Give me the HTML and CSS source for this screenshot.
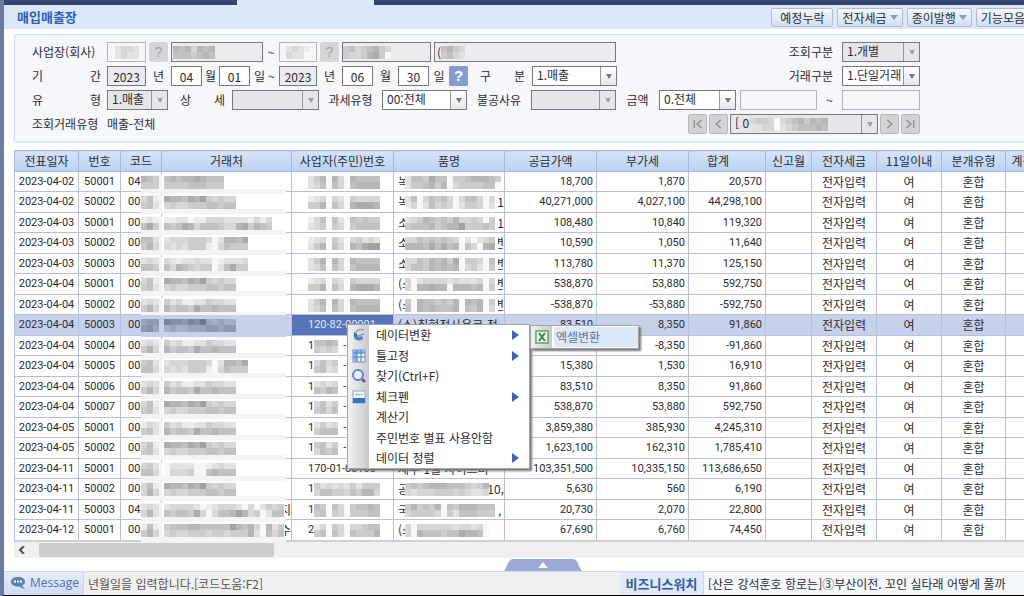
FILE: index.html
```html
<!DOCTYPE html>
<html lang="ko">
<head>
<meta charset="utf-8">
<title>매입매출장</title>
<link rel="stylesheet" href="styles.css">
</head>
<body>
<div class="app">
  <div class="tabstrip"><span class="tab-dark tab-first"></span><span class="tab-open"></span><span class="tab-dark tab-rest"></span></div>
  <header class="titlebar">
    <h1>매입매출장</h1>
    <div class="tools">
      <button type="button">예정누락</button>
      <button type="button">전자세금<i class="tri"></i></button>
      <button type="button">종이발행<i class="tri"></i></button>
      <button type="button">기능모음<i class="tri"></i></button>
    </div>
  </header>

  <main class="content">
    <form class="panel">
      <div class="row">
        <label class="lead" for="office">사업장(회사)</label>
        <span class="field w39 pale"><input id="office" disabled><svg class="mosaic" data-p="2332/2322" data-x="8"></svg></span>
        <button type="button" class="help off">?</button>
        <span class="field w92"><input aria-label="사업장명" disabled><svg class="mosaic" data-p="6563656/5554565" data-x="2"></svg></span>
        <span class="w10">~</span>
        <span class="field w38 pale"><input aria-label="사업장 끝" disabled><svg class="mosaic" data-p="2321/3220" data-x="7"></svg></span>
        <button type="button" class="help off">?</button>
        <span class="field w89"><input aria-label="사업장명 끝" disabled><svg class="mosaic" data-p="45345643/43346740" data-x="1"></svg></span>
        <span class="field w182"><input aria-label="주소" value="(이" disabled><svg class="mosaic" data-p="5643/4532" data-x="7"></svg></span>
        <span class="right">
          <label for="view">조회구분</label>
          <span class="drop off w78"><select id="view" disabled><option>1.개별</option></select></span>
        </span>
      </div>
      <div class="row">
        <label class="lead spread" for="y1">기 간</label>
        <input id="y1" class="w39" value="2023" disabled>
        <span class="w19">년</span>
        <input class="w31" aria-label="시작 월" value="04">
        <span class="w11">월</span>
        <input class="w31" aria-label="시작 일" value="01">
        <span class="w23">일 ~</span>
        <input class="w38" aria-label="끝 연도" value="2023" disabled>
        <span class="w19">년</span>
        <input class="w31" aria-label="끝 월" value="06">
        <span class="w19">월</span>
        <input class="w31" aria-label="끝 일" value="30">
        <span class="w14">일</span>
        <button type="button" class="help">?</button>
        <label class="w58 spread" for="kind">구 분</label>
        <span class="drop w85"><select id="kind"><option>1.매출</option></select></span>
        <span class="right">
          <label for="deal">거래구분</label>
          <span class="drop w78"><select id="deal"><option>1.단일거래</option></select></span>
        </span>
      </div>
      <div class="row">
        <label class="lead spread" for="type">유 형</label>
        <span class="drop off w61"><select id="type" disabled><option>1.매출</option></select></span>
        <label class="w58 spread" for="detail">상 세</label>
        <span class="drop off w87"><select id="detail" disabled><option></option></select></span>
        <label class="w57" for="tax">과세유형</label>
        <span class="drop w85"><select id="tax"><option>00:전체</option></select></span>
        <label class="w58" for="reason">불공사유</label>
        <span class="drop off w85"><select id="reason" disabled><option></option></select></span>
        <label class="w37" for="amount">금액</label>
        <span class="drop w77"><select id="amount"><option>0.전체</option></select></span>
        <span class="right">
          <span class="field w77 pale"><input aria-label="금액 시작" disabled></span>
          <span class="w19">~</span>
          <span class="field w78 pale"><input aria-label="금액 끝" disabled></span>
        </span>
      </div>
      <div class="row">
        <span class="lead">조회거래유형</span>
        <span>매출-전체</span>
        <span class="right pager">
          <button type="button" class="nav" aria-label="처음"><svg viewBox="0 0 19 19"><path d="M6 5v9M14 5L9 9.500l5 4.500"/></svg></button>
          <button type="button" class="nav" aria-label="이전"><svg viewBox="0 0 19 19"><path d="M12 5L7 9.500l5 4.500"/></svg></button>
          <span class="drop off w148"><select aria-label="거래처 선택" disabled><option>[ 0</option></select><svg class="mosaic" data-p="3443034564656/2233023455565" data-x="20"></svg></span>
          <button type="button" class="nav" aria-label="다음"><svg viewBox="0 0 19 19"><path d="M7 5l5 4.500L7 14"/></svg></button>
          <button type="button" class="nav" aria-label="마지막"><svg viewBox="0 0 19 19"><path d="M5 5l5 4.500L5 14M13 5v9"/></svg></button>
        </span>
      </div>
    </form>

    <section class="ledger">
      <table>
        <colgroup><col class="c64"><col class="c42"><col class="c41"><col class="c130"><col class="c102"><col class="c111"><col class="c92"><col class="c92"><col class="c77"><col class="c46"><col class="c65"><col class="c65"><col class="c64"><col class="c56"></colgroup>
        <thead><tr><th>전표일자</th><th>번호</th><th>코드</th><th>거래처</th><th>사업자(주민)번호</th><th>품명</th><th>공급가액</th><th>부가세</th><th class="sum">합계</th><th>신고월</th><th>전자세금</th><th>11일이내</th><th>분개유형</th><th>계정코드</th></tr></thead>
        <tbody id="rows"></tbody>
      </table>
      <div class="scrollbar"><svg class="arrow" viewBox="0 0 8 8"><path d="M6 0L2 4l4 4"/></svg><span class="thumb"></span></div>

      <div class="menus">
        <ul class="menu">
          <li><span class="ico"><svg viewBox="0 0 14 14"><path d="M2 7c-1 5 5 7 9 4l-1-3c-3 1-4 1-5-1z" fill="#4f7fce"/><path d="M4 5c1-4 5-4 8-3M6 8l6-2" fill="none" stroke="#8d9bb5" stroke-width="1.500"/><path d="M2 4l4 3-4 2z" fill="#3c6ab8"/></svg></span><button type="button">데이터변환</button><i class="more"></i></li>
          <li><span class="ico"><svg viewBox="0 0 14 14"><rect x="1" y="1" width="12" height="12" fill="#eaf3ff" stroke="#6594d0"/><path d="M1 1h12v3H1zM1 1h4v12H1z" fill="#8db6ea"/><path d="M5 1v12M9 1v12M1 4h12M1 8h12" stroke="#4d7dc0"/></svg></span><button type="button">틀고정</button><i class="more"></i></li>
          <li><span class="ico"><svg viewBox="0 0 14 14"><circle cx="6" cy="6" r="5" fill="#eef6ff" stroke="#5b87cc" stroke-width="2"/><path d="M10 10l3 3" stroke="#666" stroke-width="3"/></svg></span><button type="button">찾기(Ctrl+F)</button></li>
          <li><span class="ico"><svg viewBox="0 0 14 14"><rect x="1" y="1" width="12" height="12" fill="#f3f7fc" stroke="#91a7c6"/><path d="M3 5l2-1 2 1 2-1 2 1" fill="none" stroke="#9ab"/><path d="M1 8h12v5H1z" fill="#2f72c8"/></svg></span><button type="button">체크펜</button><i class="more"></i></li>
          <li><span class="ico"></span><button type="button">계산기</button></li>
          <li><span class="ico"></span><button type="button">주민번호 별표 사용안함</button></li>
          <li><span class="ico"></span><button type="button">데이터 정렬</button><i class="more"></i></li>
        </ul>
        <ul class="menu sub">
          <li><span class="ico"><svg viewBox="0 0 14 14"><rect x="1" y="1" width="12" height="12" fill="#f4fbf2" stroke="#5da35f" stroke-width="1.500"/><path d="M4 3l6 8M10 3l-6 8" stroke="#2f8b3c" stroke-width="2"/></svg></span><button type="button">엑셀변환</button></li>
        </ul>
      </div>
    </section>
  </main>

  <div class="drawer"><button type="button" aria-label="펼치기"><svg viewBox="0 0 78 12"><path d="M0 12C4 8 3 0 10 0h58c7 0 6 8 10 12z" fill="#9aaad4"/><path d="M34 9l5-6 5 6z" fill="#fff"/></svg></button></div>
  <footer class="status">
    <div class="msg"><svg viewBox="0 0 16 14"><path d="M8 1c4 0 7 2 7 4.500 0 2-1 3-3 4l3 4-6-3C4 10.500 1 9 1 5.500 1 3 4 1 8 1z" fill="#5d7fb5"/><path d="M4 5.500h2M7 5.500h2M10 5.500h2" stroke="#fff" stroke-width="2"/></svg>Message</div>
    <p class="hint">년월일을 입력합니다.[코드도움:F2]</p>
    <strong>비즈니스워치</strong>
    <a class="news" href="#">[산은 강석훈호 항로는]③부산이전. 꼬인 실타래 어떻게 풀까</a>
  </footer>
</div>
<script src="ledger.js"></script>
</body>
</html>
```

FILE: ledger.js
```js
// Masked values: one digit per 6px block (0 = clear, 9 = darkest), rows split by "/".
const A = '766576843433/343344455455';
const B = '423112243322/645547556555';
const C = '23334443026657/32324441035444';
const D = '32122322012223/53654344025744';
const ID1 = '246063065555/235053056666';
const ID2 = '123032043333/446053067776';
const ID3 = '135052054544/234043045555';

// date, no, code, code mask, name mask, name tail, id, id mask, item, item mask, item tail, supply, vat, total
const entries = [
  ['04-02','50001','04','654/444','5656676555/4444555444','','',ID1,'녹','2554755044566654/2445646034444550','','18,700','1,870','20,570'],
  ['04-02','50002','00','351/452',A,'','',ID2,'녹','250354530355303/130253430244302','1','40,271,000','4,027,100','44,298,100'],
  ['04-03','50001','00','121/574','112201133322221313/545763555433674654','','',ID3,'소','234654546334304/455564566844454','1','108,480','10,840','119,320'],
  ['04-03','50002','00','552/463',C,'','','123042034232/246053065788','소','335454543020234/666575756053067','변','10,590','1,050','11,640'],
  ['04-03','50003','00','232/554',D,'','',ID1,'소','335465647044305/355465656034204','변','113,780','11,370','125,150'],
  ['04-04','50001','00','351/452',A,'','',ID2,'(소','302333323222303/306676606665604','변','538,870','53,880','592,750'],
  ['04-04','50002','00','232/463',B,'','',ID1,'(소','406554546065604/506565556054603','변','-538,870','-53,880','-592,750'],
  ['04-04','50003','00','455/564',A,'','120-82-00001','','(소)취현적사용료 적','','','83,510','8,350','91,860'],
  ['04-04','50004','00','232/463',B,'','1','5565/4343','','','','-83,510','-8,350','-91,860'],
  ['04-04','50005','00','452/553',C,'','1','3534/4523','','','','15,380','1,530','16,910'],
  ['04-04','50006','00','232/463',B,'','1','2323/5465','','','','83,510','8,350','91,860'],
  ['04-04','50007','00','351/452',A,'','1','3524/4535','','','','538,870','53,880','592,750'],
  ['04-05','50001','00','132/452',B,'','1','2423/4555','','','','3,859,380','385,930','4,245,310'],
  ['04-05','50002','00','351/452',A,'','1','4524/3545','','','','1,623,100','162,310','1,785,410'],
  ['04-11','50001','00','342/553','022220012322/033340056555','','170-01-00100','','제주 1월 사이트비','','','103,351,500','10,335,150','113,686,650'],
  ['04-11','50002','00','351/363',A,'','1','42323242444/35544354663','공인전용금(2020.10,','45456665554346/32333444343223','','5,630','560','6,190'],
  ['04-11','50003','042','232/362','23333201233320302434/54554730355686340255','지','1','54053045565/45043044455','국','464546054666555/344443042555444',',','20,730','2,070','22,800'],
  ['04-12','50001','00','151/463','45556655555865630624/34334443443444620535','수','2','13043033455/45053054446','(소','30333333233230/30655545576650','','67,690','6,760','74,450']
];

const NS = 'http://www.w3.org/2000/svg';

function block(svg, x, y, w, h, fill) {
  const r = document.createElementNS(NS, 'rect');
  r.setAttribute('x', x); r.setAttribute('y', y);
  r.setAttribute('width', w); r.setAttribute('height', h);
  r.setAttribute('fill', fill);
  svg.appendChild(r);
}

function paint(svg, pattern, dark, band) {
  if (band) {
    block(svg, 0, 3, 21, 18, dark ? '#c7d2ea' : '#f3f4f6');
    block(svg, 0, 17, band, 5, dark ? '#c7d2ea' : '#f3f4f6');
  }
  pattern.split('/').forEach((line, r) => [...line].forEach((c, i) => {
    const g = 248 - 11 * c;
    const fill = dark ? `rgb(${g - 50},${g - 40},${g - 15})` : `rgb(${g},${g},${g})`;
    if (!(dark && c === '0')) block(svg, i * 6, 4 + r * 6, 6, r ? 7 : 6, fill);
  }));
}

function mask(td, cls, pattern, dark, band) {
  if (!pattern) return;
  const svg = document.createElementNS(NS, 'svg');
  svg.setAttribute('class', 'mosaic ' + cls);
  paint(svg, pattern, dark, band);
  td.appendChild(svg);
}

function cell(tr, text, cls) {
  const td = document.createElement('td');
  if (cls) td.className = cls;
  td.textContent = text;
  tr.appendChild(td);
  return td;
}

function tail(td, text, cls) {
  if (!text) return;
  const s = document.createElement('span');
  s.className = cls;
  s.textContent = text;
  td.appendChild(s);
}

const body = document.getElementById('rows');
entries.forEach((e, i) => {
  const [date, no, code, codeM, nameM, nameT, id, idM, item, itemM, itemT, supply, vat, total] = e;
  const tr = document.createElement('tr');
  const on = i === 7;
  if (on) tr.className = 'selected';
  cell(tr, '2023-' + date, 'num');
  cell(tr, no, 'num');
  mask(cell(tr, code, 'code'), 'at-code', codeM, on, 145);
  const name = cell(tr, '', 'name');
  mask(name, 'at-name', nameM, on, 0);
  tail(name, nameT, 'tail');
  const idCell = cell(tr, id, 'id');
  mask(idCell, id ? 'at-id-tail' : 'at-id', idM, false, 0);
  if (i > 7 && i < 14) tail(idCell, '-', 'dash');
  const it = cell(tr, item, 'item');
  mask(it, 'at-item', itemM, false, 0);
  tail(it, itemT, 'tail');
  cell(tr, supply, 'amt');
  cell(tr, vat, 'amt');
  cell(tr, total, 'amt');
  cell(tr, '');
  cell(tr, '전자입력');
  cell(tr, '여');
  cell(tr, '혼합');
  cell(tr, '');
  body.appendChild(tr);
});

document.querySelectorAll('.panel .mosaic').forEach(svg => {
  svg.style.left = svg.dataset.x + 'px';
  paint(svg, svg.dataset.p, false, 0);
});
```

FILE: styles.css
```css
* { box-sizing: border-box; }
body {
  margin: 0;
  background: #fff;
  color: #2b2b30;
  font: 12px/16px "Noto Sans CJK KR", sans-serif;
}
button, input, select { font: inherit; color: inherit; margin: 0; padding: 0; }
button { cursor: pointer; }
ul, p, h1 { margin: 0; padding: 0; list-style: none; }

.app {
  display: flex;
  flex-direction: column;
  min-height: 100vh;
  overflow: hidden;
  border-left: 4px solid #6a7ba3;
  border-bottom: 2px solid #000;
}
.tabstrip { display: flex; height: 5px; }
.tab-dark { background: #33456f; }
.tab-first { width: 233px; }
.tab-open { width: 137px; background: #dce9fb; }
.tab-rest { flex: 1; }

.titlebar {
  display: flex;
  justify-content: space-between;
  height: 24px;
  padding: 3px 0 2px 13px;
  background: #dce9fb;
}
.titlebar h1 { font-size: 13px; line-height: 18px; font-weight: 700; color: #2a5eb0; }
.tools { display: flex; gap: 4px; margin-right: -17px; }
.tools button {
  display: flex;
  align-items: center;
  gap: 3px;
  height: 19px;
  padding: 0 8px;
  border: 1px solid #aebcd2;
  border-radius: 2px;
  background: linear-gradient(#f6f9fd, #d3deee);
}
.tools button + button { padding: 0 4px; }
.tri { border: 4px solid transparent; border-top: 5px solid #8b9bb5; border-bottom: 0; }

.content { flex: 1; padding: 5px 0 0 10px; }
.panel {
  display: flex;
  flex-direction: column;
  gap: 4px;
  height: 109px;
  padding: 7px 104px 0 17px;
  border: 1px solid #cfdae9;
  border-right: 0;
  border-bottom: 2px solid #dfe5ef;
  border-radius: 3px 0 0 3px;
  background: #f6f7fb;
}
.row { display: flex; align-items: center; gap: 3px; height: 20px; white-space: nowrap; text-align: center; }
.row > * { flex: none; }
.lead { width: 72px; padding-right: 3px; text-align: left; }
.spread { text-align-last: justify; }
.w58.spread { padding: 0 4px 0 9px; }
.row .right { display: flex; align-items: center; gap: 3px; margin-left: auto; }
.row .pager { gap: 2px; }
.right label { padding-right: 6px; }

.row input {
  display: block;
  height: 20px;
  border: 1px solid #77787c;
  border-radius: 0;
  background: #fff;
  text-align: center;
}
.row input:disabled { background: #ececee; color: #2b2b30; }
.row .field { position: relative; overflow: hidden; }
.row .field input { width: 100%; text-align: left; padding-left: 2px; }
.row .pale input { background: #f7f6f8; border-color: #b4b4b8; }
.help {
  width: 19px;
  height: 20px;
  border: 0;
  border-radius: 2px;
  background: #869bd0;
  color: #fff;
  font: 700 15px/20px "Liberation Sans", sans-serif;
}
.help.off { background: #d5d5d8; color: #a2a2a6; font-weight: 400; }

.drop { position: relative; height: 20px; }
.drop select {
  appearance: none;
  display: block;
  width: 100%;
  height: 20px;
  padding: 0 0 2px 4px;
  border: 1px solid #77787c;
  border-radius: 0;
  background: #fff;
  opacity: 1;
}
.drop::before {
  content: "";
  position: absolute;
  right: 1px;
  top: 1px;
  width: 15px;
  height: 18px;
  border-left: 1px solid #97979b;
  background: linear-gradient(#fff, #e6e6e9);
}
.drop::after {
  content: "";
  position: absolute;
  right: 5px;
  top: 8px;
  border: 3px solid transparent;
  border-top: 5px solid #77787d;
  border-bottom: 0;
}
.drop.off select, .drop.off::before { background: #e6e6e8; }
.drop.off::after { border-top-color: #a0a0a4; }
.nav { width: 19px; height: 20px; border: 1px solid #b8b8bb; border-radius: 2px; background: #d3d3d5; }
.nav svg { display: block; width: 17px; height: 18px; fill: none; stroke: #8e8e93; stroke-width: 1.500; }

.w10 { width: 10px; } .w11 { width: 11px; } .w14 { width: 14px; } .w19 { width: 19px; }
.w23 { width: 23px; } .w31 { width: 31px; } .w37 { width: 37px; } .w38 { width: 38px; }
.w39 { width: 39px; } .w57 { width: 57px; } .w58 { width: 58px; } .w61 { width: 61px; }
.w77 { width: 77px; } .w78 { width: 78px; } .w85 { width: 85px; } .w87 { width: 87px; }
.w89 { width: 89px; } .w92 { width: 92px; } .w148 { width: 148px; } .w182 { width: 182px; }

.mosaic { position: absolute; top: 0; height: 20px; width: 84px; overflow: visible; pointer-events: none; }

.ledger { position: relative; margin-top: 7px; }
table { border-collapse: collapse; table-layout: fixed; width: 1047px; border-bottom: 2px solid #cfcfd2; }
.c64 { width: 64px; } .c42 { width: 42px; } .c41 { width: 41px; } .c130 { width: 130px; }
.c102 { width: 102px; } .c111 { width: 111px; } .c92 { width: 92px; } .c77 { width: 77px; }
.c46 { width: 46px; } .c65 { width: 65px; } .c56 { width: 56px; }
th, td {
  position: relative;
  padding: 0;
  border: 1px solid #b9bedb;
  text-align: center;
  white-space: nowrap;
  line-height: 16px;
  font-weight: 400;
}
th { height: 21px; background: linear-gradient(#d6e4f9, #bbd1f2); border-color: #a3b8dc; }
th.sum { padding-right: 18px; }
td { height: 20px; }
tbody tr:nth-child(even) td { height: 21px; }
.num, .amt, .code, .id { font-family: Roboto, "Liberation Sans", sans-serif; font-size: 11px; }
td.amt { text-align: right; padding-right: 3px; }
td.code, td.item, td.id { text-align: left; }
td.code { padding-left: 7px; }
td.id { padding-left: 16px; }
td.item { padding-left: 4px; overflow: hidden; }
.selected td { background: #c7d2ea; border-color: #b4c2e2; }
.selected td.id { background: #5874b8; color: #dfe8fa; }
.at-code { left: 20px; width: 21px; }
.at-name { left: 2px; width: 120px; z-index: 1; }
.at-id { left: 16px; width: 78px; }
.at-id-tail { left: 22px; width: 72px; }
.at-item { left: 11px; width: 90px; }
.tail { position: absolute; right: 0; top: 2px; width: 6px; overflow: hidden; direction: rtl; }
.dash { margin-left: 29px; }

.scrollbar { display: flex; align-items: center; height: 16px; background: #f0f0f0; }
.arrow { width: 8px; height: 8px; margin: 0 13px 0 4px; fill: none; stroke: #505050; stroke-width: 2; }
.thumb { width: 235px; height: 14px; background: #cdcdcd; }

.menus { position: absolute; z-index: 2; left: 333px; top: 174px; display: flex; align-items: flex-start; }
.menu { width: 183px; border: 1px solid #a4a4a8; background: #fff; box-shadow: 2px 2px 2px #77777a; }
.menu li { display: flex; align-items: center; height: 20px; }
.menu li:nth-child(even) { height: 21px; }
.menu button { flex: 1; border: 0; background: none; text-align: left; line-height: 18px; }
.ico { align-self: stretch; display: flex; align-items: center; width: 21px; padding-left: 4px; margin-right: 7px; background: linear-gradient(90deg, #f2f2f4, #c9c9cd); }
.ico svg { width: 14px; height: 14px; }
.more { margin-right: 10px; border: 5px solid transparent; border-left: 7px solid #3f66b5; border-right: 0; }
.menu.sub { width: 109px; margin-top: 1px; }
.sub li { height: 22px; }
.sub .ico { margin-right: 2px; }
.sub button { height: 20px; padding-left: 2px; background: #dbe9fb; color: #64748c; }

.drawer { display: flex; justify-content: center; height: 13px; padding-left: 58px; }
.drawer button { width: 78px; height: 12px; margin-top: 1px; border: 0; background: none; }
.drawer svg { display: block; width: 78px; height: 12px; }
.status { display: flex; height: 24px; align-items: stretch; border-top: 1px solid #d3d6dd; background: #f0f0f0; line-height: 24px; white-space: nowrap; }
.msg { display: flex; align-items: center; gap: 4px; width: 80px; padding-left: 6px; background: linear-gradient(#e6effc, #cbdcf5); color: #4f6fa5; font: 12px/24px "Open Sans", sans-serif; border-right: 1px solid #d0d6e0; }
.msg svg { width: 16px; height: 14px; }
.hint { flex: 1; padding-left: 4px; color: #5a5348; }
.status strong { width: 84px; text-align: center; background: #dfeafb; color: #35599b; font-size: 13px; border-right: 1px solid #cdd6e6; }
.news { flex: none; width: 320px; padding-left: 4px; background: #f4f7fc; color: inherit; text-decoration: none; }
```
